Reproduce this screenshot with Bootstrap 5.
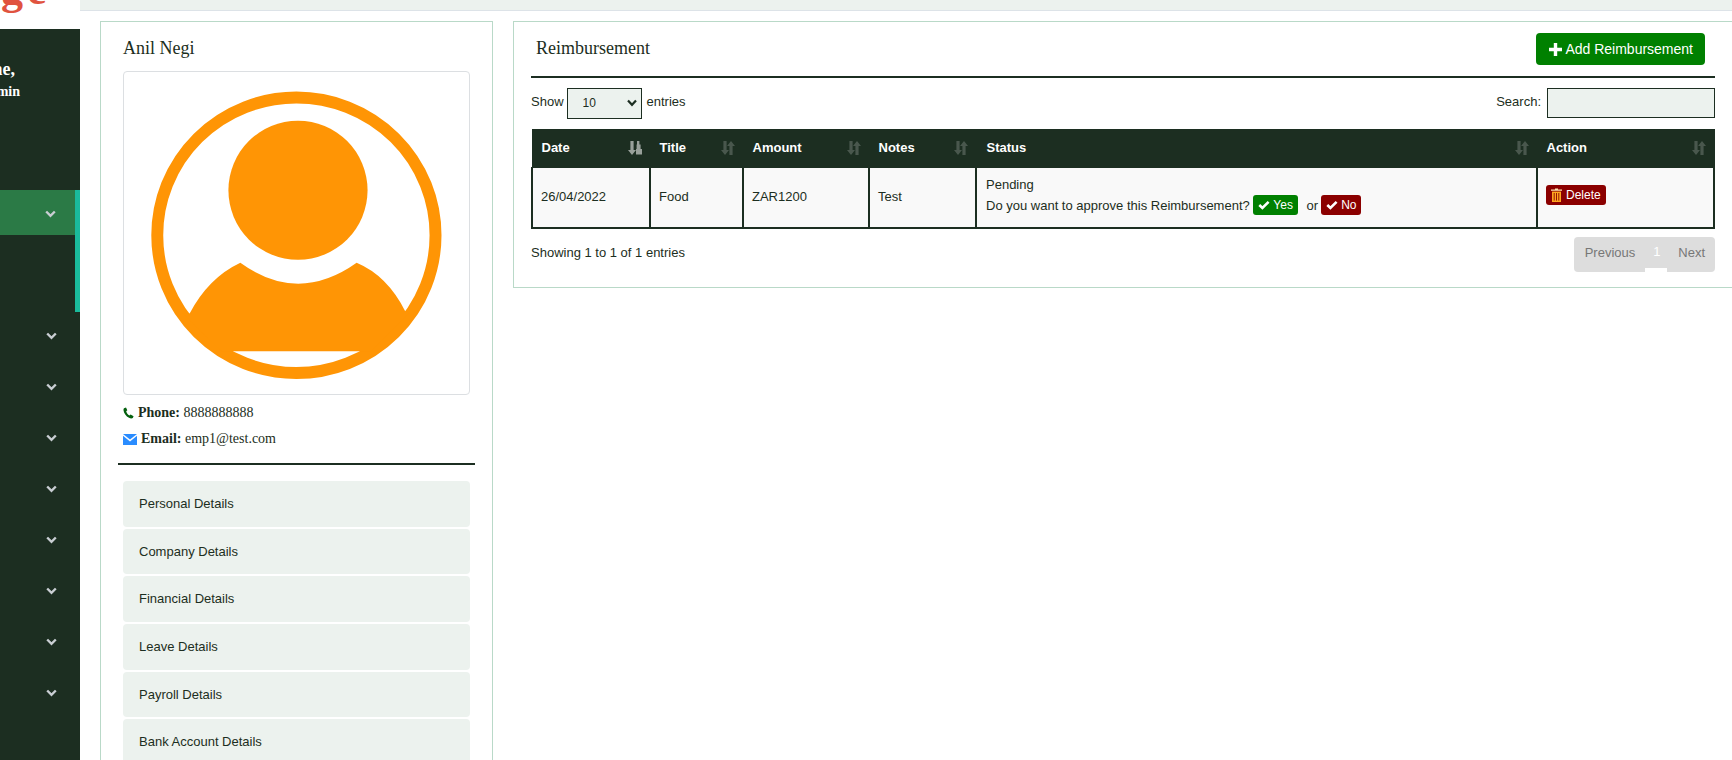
<!doctype html>
<html lang="en">
<head>
<meta charset="utf-8">
<title>Reimbursement</title>
<link href="https://cdn.jsdelivr.net/npm/bootstrap@5.3.0/dist/css/bootstrap.min.css" rel="stylesheet">
<style>
html,body{height:760px;overflow:hidden;background:#fff}
body{font-family:"Liberation Sans",Arial,sans-serif;font-size:13px;color:#1c2e21}
.shell{height:760px;overflow:hidden}
.side{width:80px;flex:0 0 80px;display:flex;flex-direction:column}
.logo-clip{height:29px;overflow:hidden;background:#fff}
.logo-txt{font:700 44px/44px "Liberation Serif",serif;color:#e0533f;margin:-32px 0 0 1px;white-space:nowrap;letter-spacing:4px}
.side-dark{background:#1c2e21;flex:1 1 auto;overflow:hidden}
.who{height:161px;padding-top:28px;font-family:"Liberation Serif",serif;font-weight:700;color:#fff;text-align:right;white-space:nowrap}
.who-a{font-size:18px;line-height:24px;padding-right:65px;display:flex;justify-content:flex-end}
.who-b{font-size:14px;line-height:21px;padding-right:60px;display:flex;justify-content:flex-end}
.grp{height:122px;border-right:5px solid #1abb9c}
.act{height:45px;background:#2b7a46;display:flex;align-items:center;justify-content:flex-end;padding:2px 19px 0 0}
.itm{height:51px;padding:20px 23px 0 0;display:flex;justify-content:flex-end;align-items:flex-start}
.chev{width:11px;height:8px;display:block}
.mainc{flex:1 1 auto;min-width:0}
.topb{height:11px;background:#ecf2ee;border-bottom:1px solid #dde3e8}
.cont{display:flex;gap:20px;padding:10px 0 0 20px;align-items:flex-start}
.lcard{width:393px;flex:0 0 393px;height:760px;background:#fff;border:1px solid #b9d9c8;padding:13px 22px 12px}
.rcard{flex:1 1 auto;min-width:0;border:1px solid #b9d9c8;border-right:0;padding:10px 17px 0 17px;height:267px}
.ttl{font:18px/26px "Liberation Serif",serif;color:#1c2e21;margin:0}
.avbox{border:1px solid #dcdfe2;border-radius:4px;height:324px;margin-top:10px}
.avbox svg{display:block;width:100%;height:100%}
.contact{font:14px/20px "Liberation Serif",serif;color:#1c2e21}
.mail-row{margin-top:6px}
.rule{border:0;border-top:2px solid #1c2e21;opacity:1;margin:0}
.lcard .rule{margin:14px -5px 16px}
.dlist{gap:2px;border-radius:0}
.dlist .list-group-item{height:45.67px;border:0;border-radius:4px;background:#ecf2ee;color:#1c2e21;font-size:13px;padding:13px 16px;line-height:20px}
.rhead{height:44px;display:flex;justify-content:space-between;align-items:flex-start}
.rhead .ttl{padding:3px 0 0 5px}
.addbtn{background:#008000;border:0;color:#fff;font-size:14px;line-height:20px;padding:6px 12px 6px 13px;height:32px;margin:1px 10px 0 0;border-radius:4px;display:flex;align-items:center;gap:3px}
.addbtn:hover{background:#008000;color:#fff}
.rcard .rule{margin:0}
.dtop{display:flex;justify-content:space-between;align-items:center;height:30px;margin-top:10px}
.dtop label{padding-bottom:2px}
.dsel{width:75px;height:31px;background-color:#ecf2ee;background-image:url("data:image/svg+xml,%3Csvg xmlns='http://www.w3.org/2000/svg' viewBox='0 0 12 10'%3E%3Cpath d='M2 2.5 6 6.8 10 2.5' fill='none' stroke='%231c2e21' stroke-width='2.2'/%3E%3C/svg%3E");border:1px solid #1c2e21;padding:0 0 0 15px;background-position:right 3px center;background-size:12px 10px;font-size:12px;color:#1c2e21;margin:0 5px -2px 3px;border-radius:0}
.dsrch{width:168px;height:30px;background:#ecf2ee;border:1px solid #1c2e21;margin:0 0 -2px 6px;border-radius:0}
.dtbl{table-layout:fixed;width:1184px;margin:11px 0 0;border-collapse:collapse;--bs-table-bg:transparent;font-size:13px;color:#1c2e21}
.dtbl th{background:#1c2e21;color:#fff;font-weight:700;height:38px;padding:0 8px 2px 9px;border:1px solid #1c2e21;vertical-align:middle}
.dtbl th.sth{padding-left:10px}
.dtbl td{background:#f9f9f9;height:60px;padding:0 8px 2px;border:2px solid #1c2e21;border-top:0;vertical-align:middle;line-height:21px}
.dtbl td.stat{padding:0 8px 4px 9px}
.dtbl td.topc{vertical-align:top;padding-top:17px}
.thin{display:flex;justify-content:space-between;align-items:center}
.sorti{width:14px;height:16px;display:block}
.tag{display:inline-flex;align-items:center;gap:3px;color:#fff;font-size:12px;line-height:16px;padding:2px 5px;border-radius:3px;vertical-align:baseline}
.tag-g{background:#008000}
.tag-r{background:#8b0000}
.tag-d{gap:4px}
.or-w{margin:0 3px 0 5px}
.dbot{display:flex;justify-content:space-between;align-items:flex-start;margin-top:8px}
.info{padding-top:6px;line-height:20px}
.pager{display:flex;height:35px;align-items:flex-start}
.pg{background:#ddd;color:#777;height:35px;line-height:32px}
.pg-a{border-radius:4px 0 0 4px;padding:0 10px 0 11px}
.pg-c{border-radius:0 4px 4px 0;padding:0 10px 0 11px}
.pg-m{color:#fff;height:31px;line-height:29px;padding:0 8px;width:22px}
</style>
</head>
<body>
<div class="shell d-flex">
  <aside class="side">
    <div class="logo-clip"><div class="logo-txt">ge</div></div>
    <div class="side-dark">
      <div class="who"><div class="who-a">Welcome,</div><div class="who-b">Super Admin</div></div>
      <div class="grp"><div class="act"><svg class="chev" viewBox="0 0 11 8"><path d="M1.2 1.5 5.5 5.8 9.8 1.5" fill="none" stroke="#c9ced3" stroke-width="2.4"/></svg></div></div>
      <div class="itm"><svg class="chev" viewBox="0 0 11 8"><path d="M1.2 1.5 5.5 5.8 9.8 1.5" fill="none" stroke="#c9ced3" stroke-width="2.4"/></svg></div>
      <div class="itm"><svg class="chev" viewBox="0 0 11 8"><path d="M1.2 1.5 5.5 5.8 9.8 1.5" fill="none" stroke="#c9ced3" stroke-width="2.4"/></svg></div>
      <div class="itm"><svg class="chev" viewBox="0 0 11 8"><path d="M1.2 1.5 5.5 5.8 9.8 1.5" fill="none" stroke="#c9ced3" stroke-width="2.4"/></svg></div>
      <div class="itm"><svg class="chev" viewBox="0 0 11 8"><path d="M1.2 1.5 5.5 5.8 9.8 1.5" fill="none" stroke="#c9ced3" stroke-width="2.4"/></svg></div>
      <div class="itm"><svg class="chev" viewBox="0 0 11 8"><path d="M1.2 1.5 5.5 5.8 9.8 1.5" fill="none" stroke="#c9ced3" stroke-width="2.4"/></svg></div>
      <div class="itm"><svg class="chev" viewBox="0 0 11 8"><path d="M1.2 1.5 5.5 5.8 9.8 1.5" fill="none" stroke="#c9ced3" stroke-width="2.4"/></svg></div>
      <div class="itm"><svg class="chev" viewBox="0 0 11 8"><path d="M1.2 1.5 5.5 5.8 9.8 1.5" fill="none" stroke="#c9ced3" stroke-width="2.4"/></svg></div>
      <div class="itm"><svg class="chev" viewBox="0 0 11 8"><path d="M1.2 1.5 5.5 5.8 9.8 1.5" fill="none" stroke="#c9ced3" stroke-width="2.4"/></svg></div>
    </div>
  </aside>
  <div class="mainc">
    <div class="topb"></div>
    <div class="cont">
      <section class="lcard">
        <h5 class="ttl">Anil Negi</h5>
        <div class="avbox">
          <svg viewBox="123 71 347 324" aria-label="Profile picture">
            <ellipse cx="296.4" cy="235.3" rx="140" ry="138.6" fill="none" stroke="#ff9505" stroke-width="12"/>
            <circle cx="298" cy="190" r="70" fill="#ff9505"/>
            <path d="M189 314Q208 278 240 263Q298 305 357 263Q388 276 406 312L410 314 372 352 221 352 182 314Z" fill="#ff9505"/>
          </svg>
        </div>
        <div class="contact mt-2 d-flex align-items-center gap-1">
          <svg width="11" height="12" viewBox="0 0 11 12"><path d="M1 1.2 3 .5 4.3 3.2 3.2 4.3C3.6 6 4.8 7.6 6.4 8.6L7.6 7.6 10.6 9.2 9.8 11C9 11.6 7.6 11.7 6 10.8 3 9.2.8 6.2.5 3.2.4 2.4.6 1.6 1 1.2Z" fill="#05600f"/></svg>
          <span><b>Phone:</b> 8888888888</span>
        </div>
        <div class="contact d-flex align-items-center gap-1 mail-row">
          <svg width="14" height="11" viewBox="0 0 14 11"><path d="M0 0H14L7 5.6Z M0 1.8V11H14V1.8L7 7.4Z" fill="#2a8cff"/></svg>
          <span><b>Email:</b> emp1@test.com</span>
        </div>
        <hr class="rule">
        <div class="list-group dlist">
          <a class="list-group-item">Personal Details</a>
          <a class="list-group-item">Company Details</a>
          <a class="list-group-item">Financial Details</a>
          <a class="list-group-item">Leave Details</a>
          <a class="list-group-item">Payroll Details</a>
          <a class="list-group-item">Bank Account Details</a>
        </div>
      </section>
      <section class="rcard">
        <div class="rhead">
          <h5 class="ttl">Reimbursement</h5>
          <button class="btn addbtn" type="button">
            <svg width="13" height="13" viewBox="0 0 13 13"><path d="M4.8 0H8.2V4.8H13V8.2H8.2V13H4.8V8.2H0V4.8H4.8Z" fill="#fff"/></svg>
            Add Reimbursement
          </button>
        </div>
        <hr class="rule">
        <div class="dtop">
          <label class="d-flex align-items-center">Show
            <select class="form-select dsel"><option>10</option><option>25</option></select>
            entries</label>
          <label class="d-flex align-items-center">Search:<input class="form-control dsrch" type="search"></label>
        </div>
        <table class="table dtbl">
          <thead>
            <tr>
              <th style="width:118px"><div class="thin">Date<svg class="sorti" viewBox="0 0 14 16"><g fill="#fff" fill-opacity=".55"><path d="M2.4 1H5.6V10H8L4 15 0 10H2.4Z"/><path d="M9 1H11.4V4.5H9ZM8.6 4.5H12.6V9H8.6ZM8 9H14V14.5H8Z"/></g></svg></div></th>
              <th style="width:93px"><div class="thin">Title<svg class="sorti" viewBox="0 0 14 16"><g fill="#fff" fill-opacity=".2"><path d="M2.4 1H5.6V10H8L4 15 0 10H2.4Z"/><path d="M10 1 14 6H11.6V15H8.4V6H6Z"/></g></svg></div></th>
              <th style="width:126px"><div class="thin">Amount<svg class="sorti" viewBox="0 0 14 16"><g fill="#fff" fill-opacity=".2"><path d="M2.4 1H5.6V10H8L4 15 0 10H2.4Z"/><path d="M10 1 14 6H11.6V15H8.4V6H6Z"/></g></svg></div></th>
              <th style="width:107px"><div class="thin">Notes<svg class="sorti" viewBox="0 0 14 16"><g fill="#fff" fill-opacity=".2"><path d="M2.4 1H5.6V10H8L4 15 0 10H2.4Z"/><path d="M10 1 14 6H11.6V15H8.4V6H6Z"/></g></svg></div></th>
              <th class="sth" style="width:561px"><div class="thin">Status<svg class="sorti" viewBox="0 0 14 16"><g fill="#fff" fill-opacity=".2"><path d="M2.4 1H5.6V10H8L4 15 0 10H2.4Z"/><path d="M10 1 14 6H11.6V15H8.4V6H6Z"/></g></svg></div></th>
              <th><div class="thin">Action<svg class="sorti" viewBox="0 0 14 16"><g fill="#fff" fill-opacity=".2"><path d="M2.4 1H5.6V10H8L4 15 0 10H2.4Z"/><path d="M10 1 14 6H11.6V15H8.4V6H6Z"/></g></svg></div></th>
            </tr>
          </thead>
          <tbody>
            <tr>
              <td>26/04/2022</td>
              <td>Food</td>
              <td>ZAR1200</td>
              <td>Test</td>
              <td class="stat">Pending<br>Do you want to approve this Reimbursement?
                <span class="tag tag-g"><svg width="12" height="10" viewBox="0 0 12 10"><path d="M1.3 5 4.4 8 10.6 1.8" fill="none" stroke="#fff" stroke-width="2.6"/></svg>Yes</span>
                <span class="or-w">or</span><span class="tag tag-r"><svg width="12" height="10" viewBox="0 0 12 10"><path d="M1.3 5 4.4 8 10.6 1.8" fill="none" stroke="#fff" stroke-width="2.6"/></svg>No</span>
              </td>
              <td class="topc"><span class="tag tag-r tag-d"><svg width="11" height="14" viewBox="0 0 11 14"><path d="M4 1.6V.5H7V1.6H11V2.8H0V1.6Z" fill="#ffe2b0"/><path d="M1 3.6H10V14H1Z" fill="#ffa51f"/><path d="M3.2 5V12.6M5.5 5V12.6M7.8 5V12.6" stroke="#8b0000" stroke-width=".9"/></svg>Delete</span></td>
            </tr>
          </tbody>
        </table>
        <div class="dbot">
          <div class="info">Showing 1 to 1 of 1 entries</div>
          <div class="pager"><span class="pg pg-a">Previous</span><span class="pg pg-m">1</span><span class="pg pg-c">Next</span></div>
        </div>
      </section>
    </div>
  </div>
</div>
<script src="https://cdn.jsdelivr.net/npm/bootstrap@5.3.0/dist/js/bootstrap.bundle.min.js"></script>
</body>
</html>
